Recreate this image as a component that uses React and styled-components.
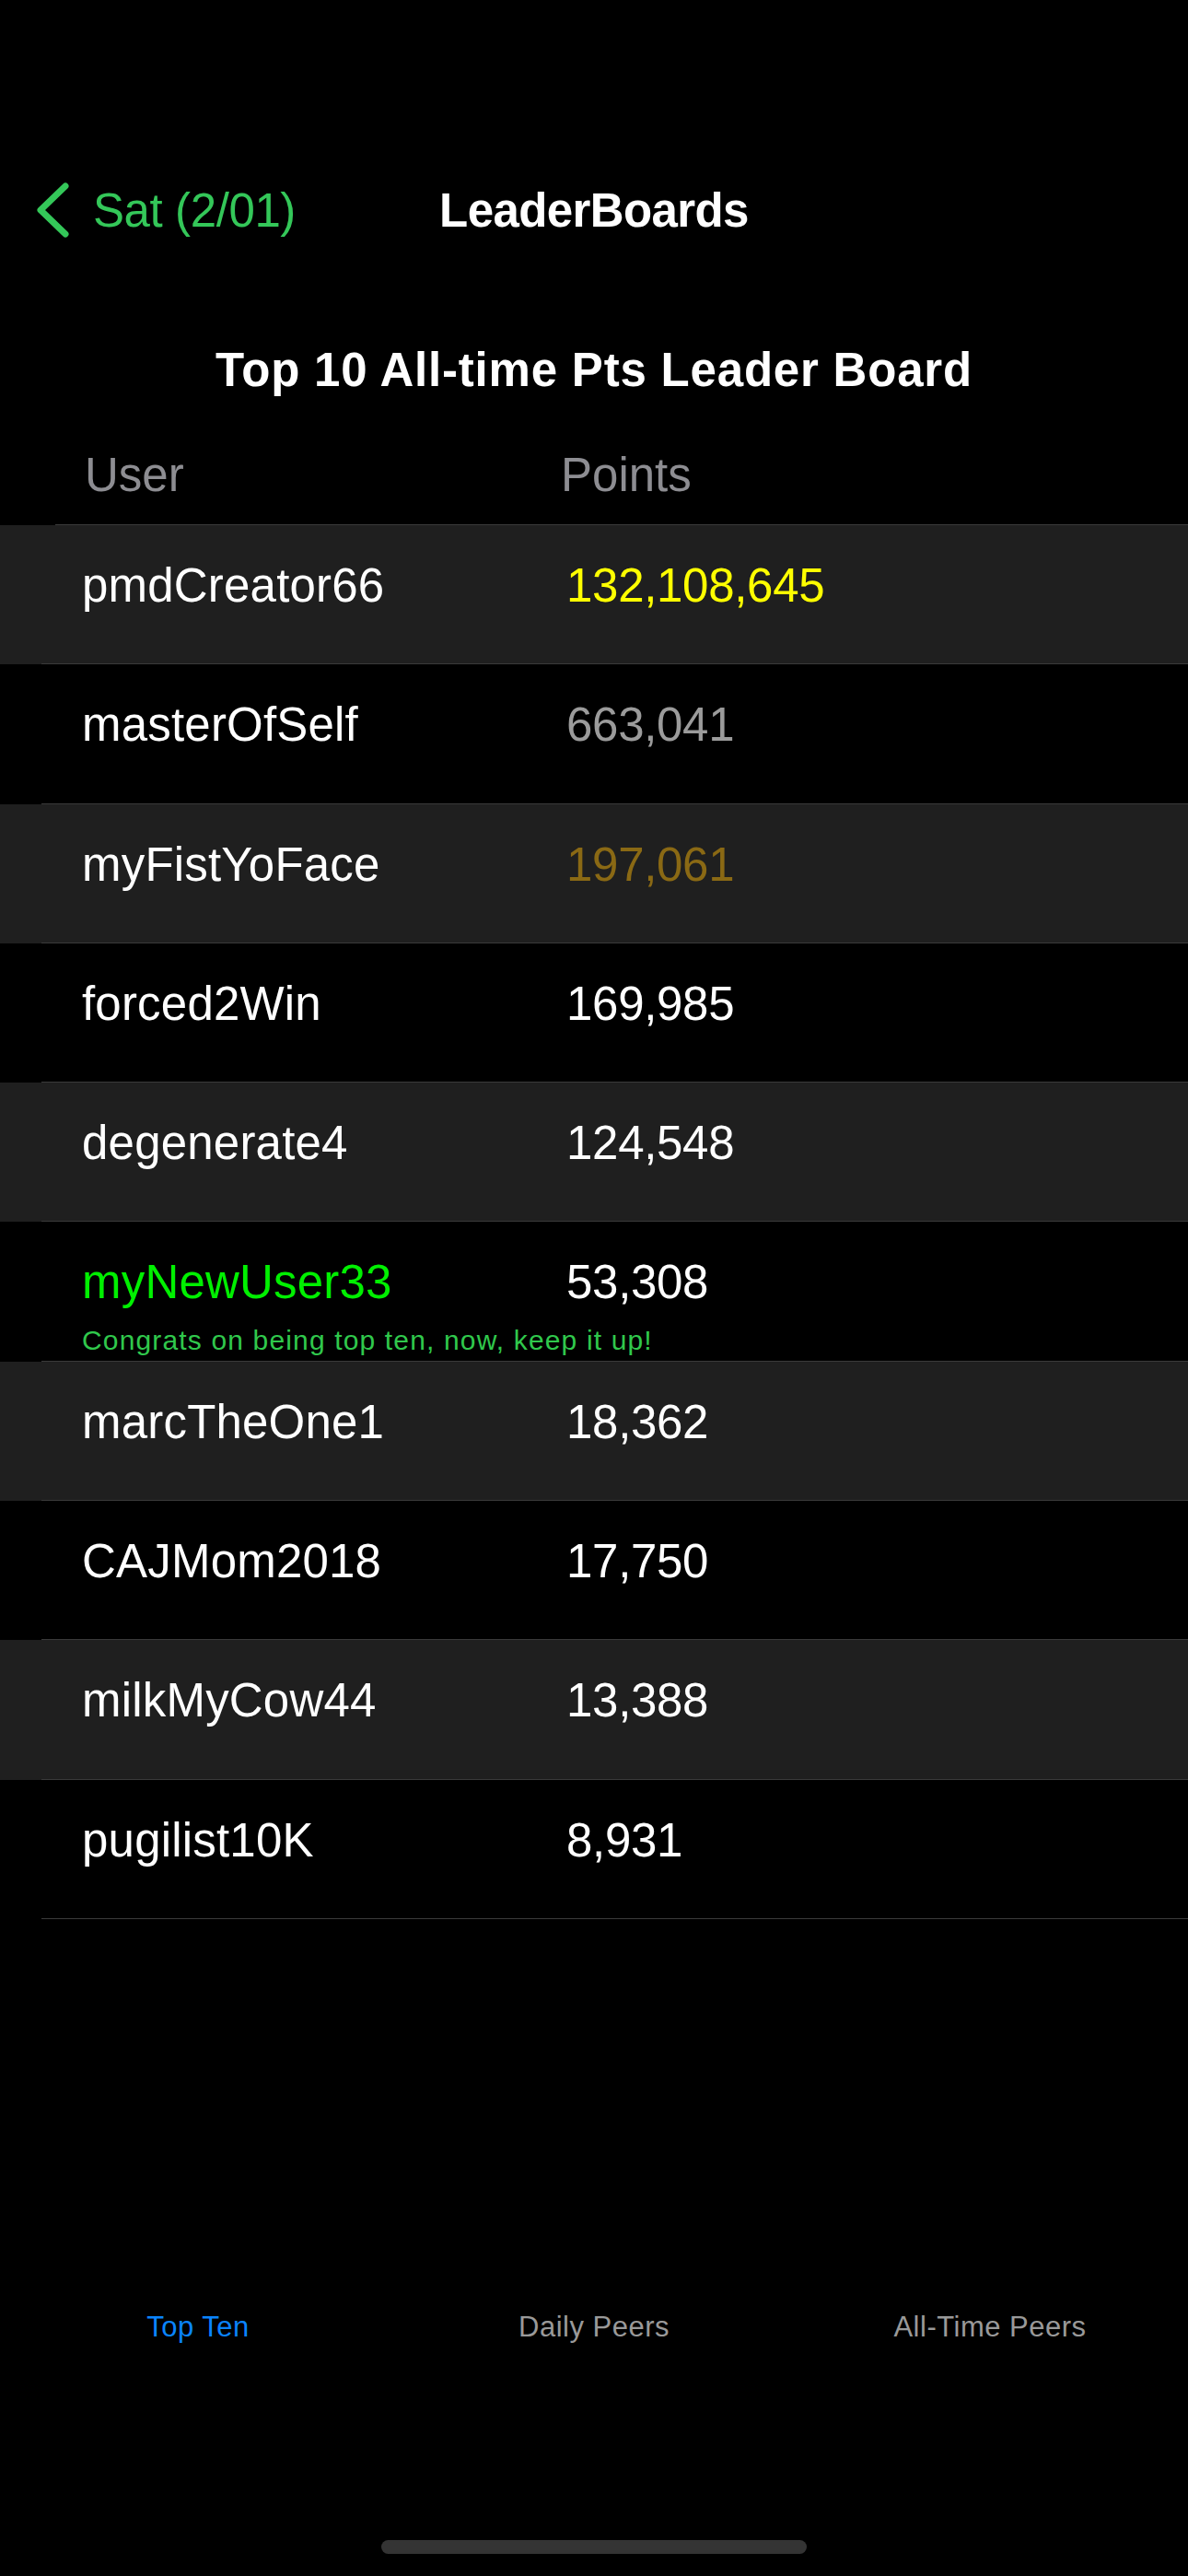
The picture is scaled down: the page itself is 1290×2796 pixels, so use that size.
import React from "react";
import styled, { createGlobalStyle } from "styled-components";

const GlobalStyle = createGlobalStyle`
  html, body {
    margin: 0;
    padding: 0;
    background: #000;
  }
  body {
    font-family: "Liberation Sans", Arial, sans-serif;
    -webkit-font-smoothing: antialiased;
  }
`;

const Page = styled.div`
  width: 1290px;
  height: 2796px;
  background: #000;
  display: flex;
  flex-direction: column;
  color: #fff;
  overflow: hidden;
`;

const StatusSpacer = styled.div`
  height: 162px;
  flex: none;
`;

const NavBar = styled.div`
  height: 132px;
  flex: none;
  display: grid;
  grid-template-columns: 1fr auto 1fr;
  align-items: center;
  padding: 0 38px;
`;

const BackButton = styled.div`
  display: flex;
  align-items: center;
  gap: 25px;
  color: #34c759;
  font-size: 51px;
  line-height: 61px;
  letter-spacing: -0.4px;
`;

const NavTitle = styled.div`
  font-size: 51px;
  line-height: 61px;
  font-weight: 700;
  letter-spacing: -0.6px;
  color: #fff;
`;

const BoardTitle = styled.h1`
  margin: 0;
  padding-top: 77px;
  text-align: center;
  font-size: 51px;
  line-height: 61px;
  font-weight: 700;
  letter-spacing: 0.8px;
  color: #fff;
`;

const HeaderRow = styled.div`
  margin-left: 60px;
  padding: 53px 0 23px 32px;
  display: flex;
  border-bottom: 1px solid #3a3a3a;
`;

const HeaderCell = styled.div`
  width: ${(p) => p.$width || "auto"};
  font-size: 51px;
  line-height: 61px;
  color: #8d8d92;
`;

const Row = styled.div`
  background: ${(p) => (p.$shaded ? "#1f1f1f" : "#000")};
  height: 151.3px;
  box-sizing: border-box;
  padding-left: 45px;
  flex: none;
`;

const RowInner = styled.div`
  height: 100%;
  box-sizing: border-box;
  border-bottom: 1px solid #3a3a3a;
  padding: 35px 0 0 44px;
`;

const RowLine = styled.div`
  display: flex;
`;

const UserCell = styled.div`
  width: 526px;
  font-size: 51px;
  line-height: 61px;
  color: ${(p) => (p.$highlight ? "#00f000" : "#fff")};
  letter-spacing: 0.2px;
`;

const PointsCell = styled.div`
  font-size: 51px;
  line-height: 61px;
  color: ${(p) => p.$color};
  letter-spacing: -0.3px;
`;

const Congrats = styled.div`
  margin-top: 14px;
  font-size: 30px;
  line-height: 37px;
  letter-spacing: 1.15px;
  color: #30c84c;
`;

const Filler = styled.div`
  flex: 1;
`;

const TabBar = styled.div`
  display: grid;
  grid-template-columns: repeat(3, 1fr);
  flex: none;
`;

const TabItem = styled.div`
  text-align: center;
  font-size: 31px;
  line-height: 37px;
  font-weight: 500;
  letter-spacing: 0.5px;
  color: ${(p) => (p.$active ? "#0a84ff" : "#999999")};
`;

const HomeArea = styled.div`
  height: 252px;
  flex: none;
  display: flex;
  justify-content: center;
  align-items: flex-end;
  padding-bottom: 24px;
  box-sizing: border-box;
`;

const HomeIndicator = styled.div`
  width: 462px;
  height: 15px;
  border-radius: 8px;
  background: #343434;
`;

const Chevron = () => (
  <svg width="38" height="60" viewBox="0 0 38 60" fill="none">
    <path
      d="M33 4 L6 30 L33 56"
      stroke="#34c759"
      strokeWidth="7"
      strokeLinecap="round"
      strokeLinejoin="round"
    />
  </svg>
);

const rows = [
  { user: "pmdCreator66", pts: "132,108,645", color: "#ffff00" },
  { user: "masterOfSelf", pts: "663,041", color: "#9b9b9b" },
  { user: "myFistYoFace", pts: "197,061", color: "#8a6914" },
  { user: "forced2Win", pts: "169,985", color: "#fff" },
  { user: "degenerate4", pts: "124,548", color: "#fff" },
  { user: "myNewUser33", pts: "53,308", color: "#fff", me: true },
  { user: "marcTheOne1", pts: "18,362", color: "#fff" },
  { user: "CAJMom2018", pts: "17,750", color: "#fff" },
  { user: "milkMyCow44", pts: "13,388", color: "#fff" },
  { user: "pugilist10K", pts: "8,931", color: "#fff" },
];

export default function App() {
  return (
    <>
      <GlobalStyle />
      <Page>
        <StatusSpacer />
        <NavBar>
          <BackButton>
            <Chevron />
            <span>Sat (2/01)</span>
          </BackButton>
          <NavTitle>LeaderBoards</NavTitle>
          <div />
        </NavBar>
        <BoardTitle>Top 10 All-time Pts Leader Board</BoardTitle>
        <HeaderRow>
          <HeaderCell $width="517px">User</HeaderCell>
          <HeaderCell>Points</HeaderCell>
        </HeaderRow>
        {rows.map((r, i) => (
          <Row key={r.user} $shaded={i % 2 === 0}>
            <RowInner>
              <RowLine>
                <UserCell $highlight={r.me}>{r.user}</UserCell>
                <PointsCell $color={r.color}>{r.pts}</PointsCell>
              </RowLine>
              {r.me && <Congrats>Congrats on being top ten, now, keep it up!</Congrats>}
            </RowInner>
          </Row>
        ))}
        <Filler />
        <TabBar>
          <TabItem $active>Top Ten</TabItem>
          <TabItem>Daily Peers</TabItem>
          <TabItem>All-Time Peers</TabItem>
        </TabBar>
        <HomeArea>
          <HomeIndicator />
        </HomeArea>
      </Page>
    </>
  );
}
